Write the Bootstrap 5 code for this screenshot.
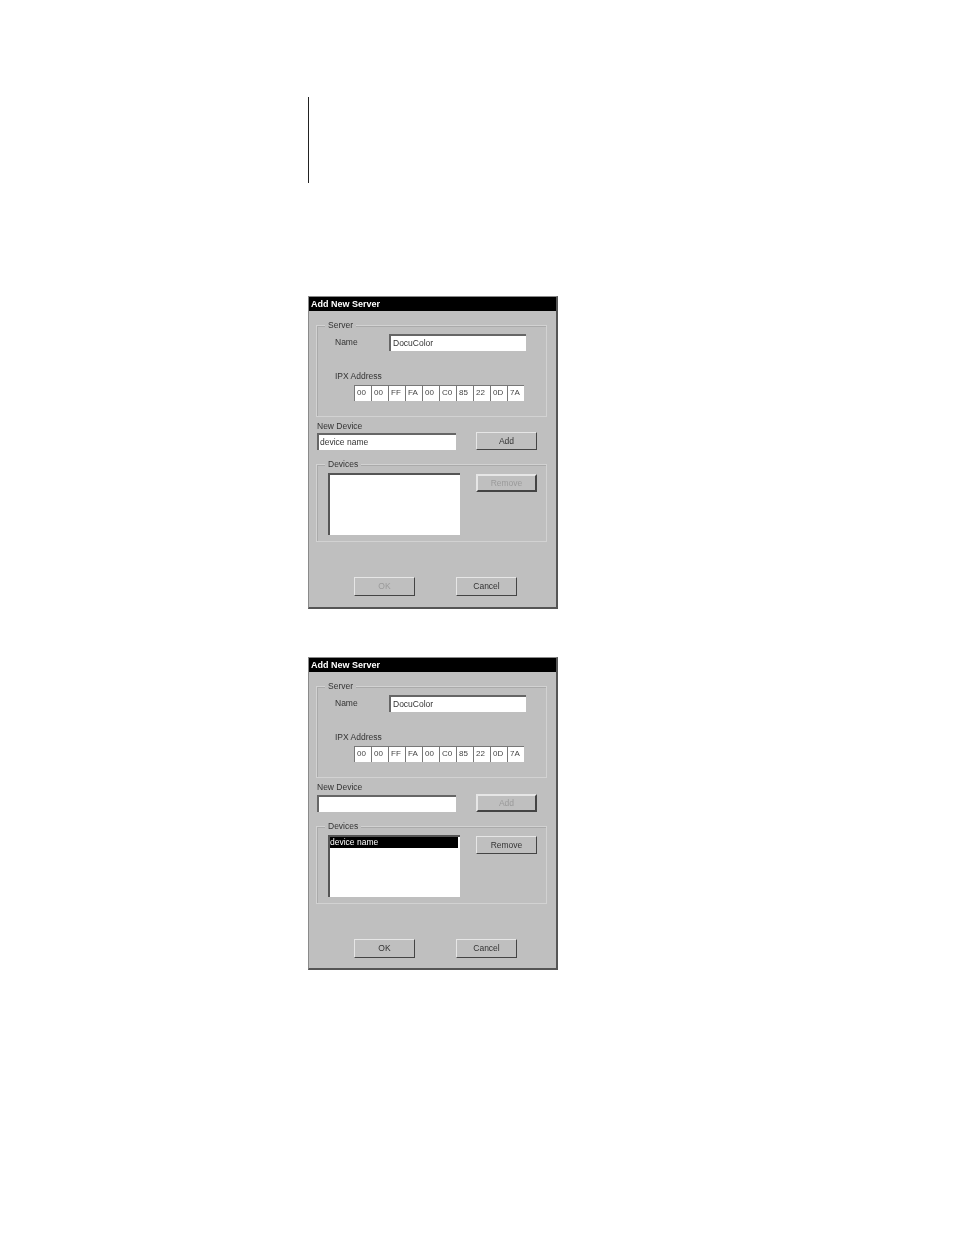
<!DOCTYPE html>
<html lang="en">
<head>
<meta charset="utf-8">
<title>Add New Server</title>
<link rel="stylesheet" href="https://cdn.jsdelivr.net/npm/bootstrap@5.3.0/dist/css/bootstrap.min.css">
<style>
html,body{background:#fff;margin:0}
body{width:954px;height:1235px;overflow:hidden;font-family:"Liberation Sans",Arial,sans-serif}
.sheet{padding:97px 0 0 308px}
.rule{width:1px;height:86px;background:#222}
.dlg{width:250px;height:313px;background:#bfbfbf;border:1px solid #8a8a8a;border-right:2px solid #555;border-bottom:2px solid #555;color:#333;font-size:8.5px;line-height:11px;filter:blur(.6px)}
.first{margin-top:113px}
.second{margin-top:48px}
.second .dev-row{margin-top:2px}
.ttl{height:14px;background:#000;color:#fff;font-weight:700;font-size:9px;line-height:14px;padding-left:2px;margin:0 0 14px}
.body-wrap{padding:0 10px 0 7px}
.grp{position:relative;border:1px solid #d2d2d2;box-shadow:inset 1px 1px 0 #aaa;width:231px}
.grp-a{height:92px;padding:8px 0 0 18px}
.grp-b{height:78px;padding:8px 0 0 11px;margin-top:14px}
.grp-tag{position:absolute;top:-6px;left:8px;background:#bfbfbf;padding:0 3px}
.lbl-name{width:54px}
.fld{background:#fff;border:0;border-top:2px solid #666;border-left:2px solid #666;border-radius:0;color:#333;font-size:8.5px;line-height:11px;padding:0 2px 2px;min-height:0;height:17px}
.fld:focus{background:#fff;box-shadow:none;color:#333;border-color:#666}
.fld-name{width:137px}
.ipx-lbl{margin-top:20px}
.ipx-row{margin:3px 0 0 19px}
.ipx{width:17px;height:16px;background:#fff;border-top:1px solid #777;border-left:1px solid #777;padding-left:2px;font-size:8px;line-height:13px;color:#444;margin:0}
.dev-lbl{margin-top:4px;padding-left:1px}
.dev-row{margin-top:1px}
.fld-dev{width:139px;margin-left:1px;height:17px;padding-left:1px}
.wbtn{width:61px;height:18px;padding:0;background:#bfbfbf;border:1px solid;border-color:#e6e6e6 #444 #444 #e6e6e6;border-radius:0;color:#333;font-size:8.5px;line-height:16px;--bs-btn-disabled-opacity:1}
.wbtn:disabled{color:#9a9a9a;background:#bfbfbf;border-color:#e6e6e6 #444 #444 #e6e6e6}
.wbtn-add{margin:-1px 0 0 20px}
.wbtn-strong{border:2px solid;border-color:#d8d8d8 #333 #333 #d8d8d8;line-height:14px}
.dev-list{width:132px;height:62px;background:#fff;border-top:2px solid #555;border-left:2px solid #555;border-radius:0}
.dev-item{background:#000;color:#fff;border:0;border-radius:0;padding:0;margin-right:2px;font-size:8.5px;line-height:11px;height:11px}
.wbtn-rem{margin:1px 0 0 16px}
.foot{margin-top:35px;padding-left:38px}
.foot .wbtn{height:19px;line-height:17px}
.foot-gap{margin-left:41px}
</style>
</head>
<body>
<div class="sheet">
  <div class="rule"></div>

  <div class="dlg first">
    <div class="ttl">Add New Server</div>
    <div class="body-wrap">
      <div class="grp grp-a">
        <span class="grp-tag">Server</span>
        <div class="d-flex align-items-center">
          <span class="lbl-name">Name</span>
          <input class="form-control fld fld-name" value="DocuColor">
        </div>
        <div class="ipx-lbl">IPX Address</div>
        <div class="d-flex ipx-row">
          <div class="ipx">00</div><div class="ipx">00</div><div class="ipx">FF</div><div class="ipx">FA</div><div class="ipx">00</div><div class="ipx">C0</div><div class="ipx">85</div><div class="ipx">22</div><div class="ipx">0D</div><div class="ipx">7A</div>
        </div>
      </div>
      <div class="dev-lbl">New Device</div>
      <div class="d-flex dev-row">
        <input class="form-control fld fld-dev" value="device name">
        <button class="btn wbtn wbtn-add">Add</button>
      </div>
      <div class="grp grp-b d-flex align-items-start">
        <span class="grp-tag">Devices</span>
        <div class="list-group dev-list"></div>
        <button class="btn wbtn wbtn-strong wbtn-rem" disabled>Remove</button>
      </div>
      <div class="d-flex foot">
        <button class="btn wbtn" disabled>OK</button>
        <button class="btn wbtn foot-gap">Cancel</button>
      </div>
    </div>
  </div>

  <div class="dlg second">
    <div class="ttl">Add New Server</div>
    <div class="body-wrap">
      <div class="grp grp-a">
        <span class="grp-tag">Server</span>
        <div class="d-flex align-items-center">
          <span class="lbl-name">Name</span>
          <input class="form-control fld fld-name" value="DocuColor">
        </div>
        <div class="ipx-lbl">IPX Address</div>
        <div class="d-flex ipx-row">
          <div class="ipx">00</div><div class="ipx">00</div><div class="ipx">FF</div><div class="ipx">FA</div><div class="ipx">00</div><div class="ipx">C0</div><div class="ipx">85</div><div class="ipx">22</div><div class="ipx">0D</div><div class="ipx">7A</div>
        </div>
      </div>
      <div class="dev-lbl">New Device</div>
      <div class="d-flex dev-row">
        <input class="form-control fld fld-dev" value="">
        <button class="btn wbtn wbtn-strong wbtn-add" disabled>Add</button>
      </div>
      <div class="grp grp-b d-flex align-items-start">
        <span class="grp-tag">Devices</span>
        <div class="list-group dev-list"><div class="list-group-item dev-item">device name</div></div>
        <button class="btn wbtn wbtn-rem">Remove</button>
      </div>
      <div class="d-flex foot">
        <button class="btn wbtn">OK</button>
        <button class="btn wbtn foot-gap">Cancel</button>
      </div>
    </div>
  </div>
</div>
<script src="https://cdn.jsdelivr.net/npm/bootstrap@5.3.0/dist/js/bootstrap.bundle.min.js"></script>
</body>
</html>
